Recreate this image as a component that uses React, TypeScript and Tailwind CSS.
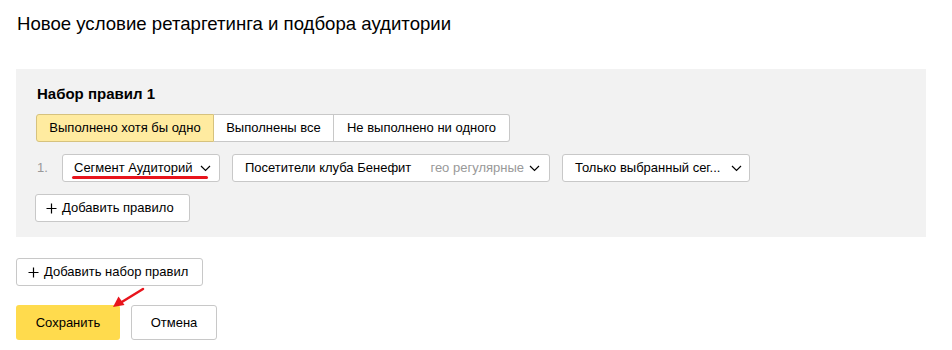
import React from "react";

const Chevron: React.FC = () => (
  <svg width="11" height="7" viewBox="0 0 11 7" className="shrink-0">
    <path d="M1 1l4.5 4.5L10 1" fill="none" stroke="#000" strokeWidth="1.2" />
  </svg>
);

const Plus: React.FC = () => (
  <svg width="11" height="11" viewBox="0 0 11 11" className="shrink-0">
    <path d="M5.5 0.5v10M0.5 5.5h10" stroke="#000" strokeWidth="1.2" />
  </svg>
);

const segments = ["Выполнено хотя бы одно", "Выполнены все", "Не выполнено ни одного"];

const App: React.FC = () => {
  return (
    <div
      className="relative w-[952px] h-[350px] bg-white text-black overflow-hidden"
      style={{ fontFamily: '"Liberation Sans", Arial, sans-serif' }}
    >
      <div className="pl-[17px] pt-[12px] text-[18.6px] leading-[24px]">
        Новое условие ретаргетинга и подбора аудитории
      </div>

      {/* rule set panel */}
      <div className="ml-4 mt-[33px] w-[910px] bg-[#f2f2f2] pl-5 pt-[15px] pb-[15px]">
        <div className="text-[15px] font-bold leading-[20px] pl-[1px]">Набор правил 1</div>

        <div className="mt-[10px] flex h-[28px] text-[13px]">
          {segments.map((s, i) => (
            <div
              key={s}
              className={
                i === 0
                  ? "flex items-center px-[12px] w-[178px] justify-center rounded-l-[3px] border border-[#d6c27e] bg-[#ffeba0]"
                  : i === 1
                  ? "flex items-center justify-center w-[120px] border-y border-r border-[#c8c8c8] bg-white"
                  : "flex items-center justify-center w-[176px] rounded-r-[3px] border-y border-r border-[#c8c8c8] bg-white"
              }
            >
              {s}
            </div>
          ))}
        </div>

        <div className="mt-3 flex items-center text-[13px]">
          <span className="w-[26px] pl-[1px] text-[#999]">1.</span>
          <div className="relative flex h-[28px] w-[158px] items-center justify-between rounded-[3px] border border-[#c8c8c8] bg-white pl-[11px] pr-[8px]">
            <span>Сегмент Аудиторий</span>
            <Chevron />
            <div className="absolute left-[9px] top-[21px] h-[2.5px] w-[136px] rounded-full bg-[#e8141c]" />
          </div>
          <div className="ml-3 flex h-[28px] w-[318px] items-center rounded-[3px] border border-[#c8c8c8] bg-white pl-[12px] pr-[9px]">
            <span>Посетители клуба Бенефит</span>
            <span className="ml-auto mr-[5px] text-[#999]">гео регулярные</span>
            <Chevron />
          </div>
          <div className="ml-3 flex h-[28px] w-[188px] items-center justify-between rounded-[3px] border border-[#c8c8c8] bg-white pl-[12px] pr-[7px]">
            <span>Только выбранный сег...</span>
            <Chevron />
          </div>
        </div>

        <button className="mt-3 -ml-[1px] flex h-[28px] w-[155px] items-center gap-[5px] rounded-[3px] border border-[#c8c8c8] bg-white pl-[10px] text-[13px]">
          <Plus />
          <span>Добавить правило</span>
        </button>
      </div>

      <button className="ml-4 mt-[21px] flex h-[28px] w-[187px] items-center gap-[5px] rounded-[3px] border border-[#c8c8c8] bg-white pl-[11px] text-[13px]">
        <Plus />
        <span>Добавить набор правил</span>
      </button>

      <div className="ml-4 mt-[19px] flex gap-[11px] text-[13px]">
        <button className="h-[35px] w-[104px] rounded-[3px] bg-[#ffdb4d]">Сохранить</button>
        <button className="h-[35px] w-[86px] rounded-[3px] border border-[#c8c8c8] bg-white">Отмена</button>
      </div>

      {/* red annotation arrow */}
      <svg className="absolute left-[105px] top-[284px]" width="45" height="30" viewBox="0 0 45 30">
        <path d="M38 5L16 18.5" stroke="#e8141c" strokeWidth="2.5" strokeLinecap="round" />
        <path d="M8 23L13.5 12.5L19.5 21Z" fill="#e8141c" />
      </svg>
    </div>
  );
};

export default App;
